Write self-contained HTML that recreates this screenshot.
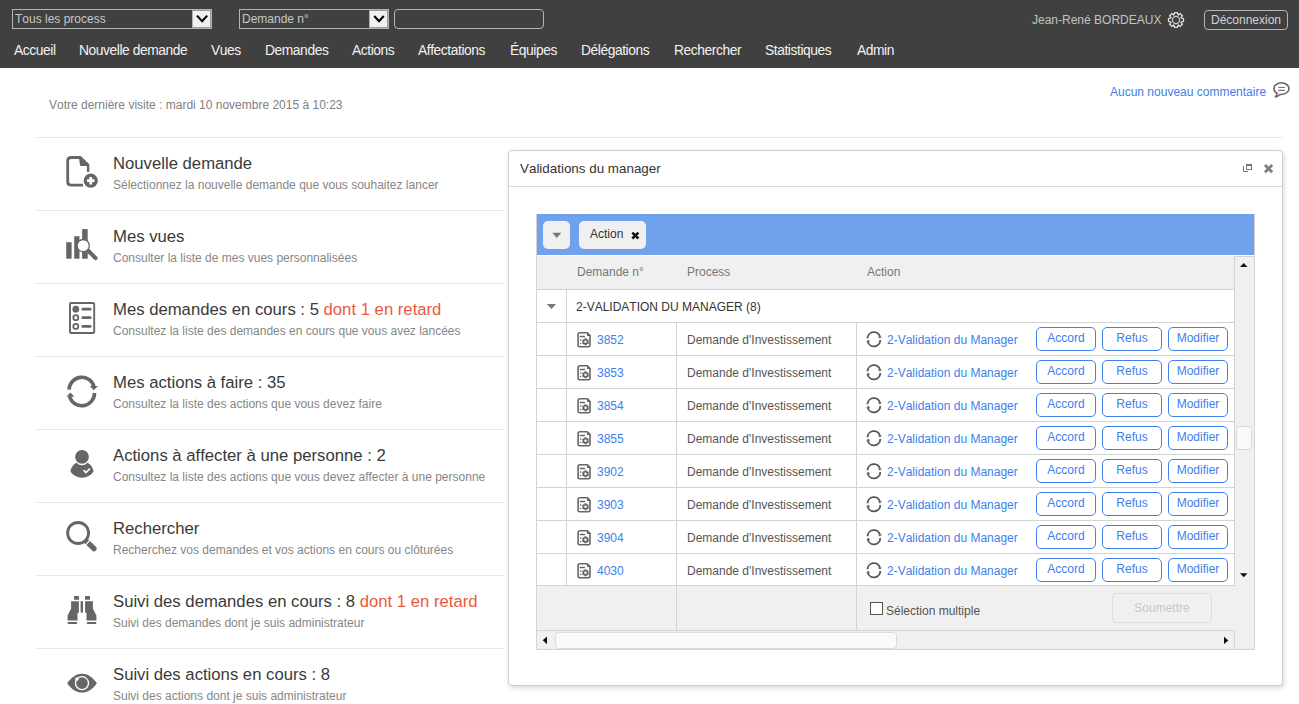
<!DOCTYPE html>
<html><head><meta charset="utf-8"><style>
*{box-sizing:border-box;margin:0;padding:0}
html,body{width:1299px;height:704px;overflow:hidden;background:#fff;font-family:"Liberation Sans",sans-serif;position:relative;font-kerning:none}
div,span{position:absolute;white-space:nowrap}
span.i{position:static}
svg{position:absolute;overflow:visible}
#hdr{left:0;top:0;width:1299px;height:68px;background:#404040}
.sel{top:9px;height:20px;border:1px solid #b4b4b4;background:#404040;color:#c8c8c8;font-size:12px;line-height:18px;padding-left:2px}
.dd{right:0;top:0;width:19px;height:18px;background:#f0f0f0;border:1px solid #9a9a9a;border-left-color:#b0b0b0}
.txtin{left:394px;top:9px;width:150px;height:20px;border:1px solid #b4b4b4;border-radius:4px}
.nav{top:42px;font-size:13.8px;letter-spacing:-0.42px;color:#f2f2f2;line-height:18px}
.user{left:1032px;top:12px;font-size:12px;color:#c2c2c2;line-height:16px}
.logout{left:1204px;top:10px;width:84px;height:20px;border:1px solid #b4b4b4;border-radius:4px;color:#d4d4d4;font-size:12px;line-height:18px;text-align:center}
.visit{left:49px;top:98px;font-size:12px;color:#808080;line-height:14px}
.comm{left:1110px;top:85px;font-size:12px;color:#4080ec;line-height:14px}
.hr{height:1px;background:#e8e8e8}
.t{left:113px;font-size:16.7px;color:#3a3a3a;line-height:20px}
.s{left:113px;font-size:12px;color:#868686;line-height:14px}
.red{position:static;color:#ea5840}
#dlg{left:508px;top:150px;width:775px;height:536px;border:1px solid #cfcfcf;border-radius:4px;background:#fff;box-shadow:1px 2px 5px rgba(0,0,0,0.16)}
.dtitle{left:11px;top:9px;font-size:13.4px;color:#333;line-height:18px}
.dsep{left:0;top:35px;width:773px;height:1px;background:#d8d8d8}
.gl{background:#d3d3d3}
.chip{top:221px;height:28px;background:#f0f0f0;border-radius:5px}
.hcell{top:265px;font-size:12px;color:#777;line-height:14px}
.cell{font-size:12px;line-height:14px}
.btn{width:60px;height:24px;border:1px solid #4080ec;border-radius:5px;color:#4080ec;font-size:12px;line-height:20px;text-align:center;background:#fff}
</style></head><body>
<div id="hdr">
<div class="sel" style="left:12px;width:200px">Tous les process<div class="dd"></div></div>
<svg style="left:0;top:0" width="1" height="1"><path d="M197 15.6 L202.1 21.2 L207.2 15.6" fill="none" stroke="#000" stroke-width="2.1"/></svg>
<div class="sel" style="left:239px;width:150px">Demande n°<div class="dd"></div></div>
<svg style="left:0;top:0" width="1" height="1"><path d="M374.2 16 L379 21.3 L383.8 16" fill="none" stroke="#000" stroke-width="2.1"/></svg>
<div class="txtin"></div>
<div class="user">Jean-René BORDEAUX</div>
<svg style="left:1166px;top:10px" width="20" height="20" viewBox="0 0 20 20"><path d="M8.03 4.76 L8.49 2.55 L11.51 2.55 L11.97 4.76 L12.31 4.90 L14.20 3.67 L16.33 5.80 L15.10 7.69 L15.24 8.03 L17.45 8.49 L17.45 11.51 L15.24 11.97 L15.10 12.31 L16.33 14.20 L14.20 16.33 L12.31 15.10 L11.97 15.24 L11.51 17.45 L8.49 17.45 L8.03 15.24 L7.69 15.10 L5.80 16.33 L3.67 14.20 L4.90 12.31 L4.76 11.97 L2.55 11.51 L2.55 8.49 L4.76 8.03 L4.90 7.69 L3.67 5.80 L5.80 3.67 L7.69 4.90 Z" fill="none" stroke="#dcdcdc" stroke-width="1.3"/><circle cx="10" cy="10" r="3.6" fill="none" stroke="#cfcfcf" stroke-width="1.2"/></svg>
<div class="logout">Déconnexion</div>
<div class="nav" style="left:14px">Accueil</div>
<div class="nav" style="left:79px">Nouvelle demande</div>
<div class="nav" style="left:211px">Vues</div>
<div class="nav" style="left:265px">Demandes</div>
<div class="nav" style="left:352px">Actions</div>
<div class="nav" style="left:418px">Affectations</div>
<div class="nav" style="left:510px">Équipes</div>
<div class="nav" style="left:581px">Délégations</div>
<div class="nav" style="left:674px">Rechercher</div>
<div class="nav" style="left:765px">Statistiques</div>
<div class="nav" style="left:857px">Admin</div>
</div>
<div class="visit">Votre dernière visite : mardi 10 novembre 2015 à 10:23</div>
<div class="comm">Aucun nouveau commentaire</div>
<svg style="left:0;top:0" width="1" height="1"><path d="M1277.3 93.4 A7.5 5.8 0 1 1 1280.3 94.3 Q1277.8 96.6 1275.4 96.9 Q1276.8 95.5 1277.3 93.4 Z" fill="none" stroke="#666" stroke-width="1.5" stroke-linejoin="round"/><path d="M1278.2 87.5 H1285 M1278.2 90.4 H1285" stroke="#777" stroke-width="1.1"/></svg>
<div class="hr" style="left:36px;top:137px;width:1246px"></div>
<div class="t" style="top:154px">Nouvelle demande</div>
<div class="s" style="top:178px">Sélectionnez la nouvelle demande que vous souhaitez lancer</div>
<div class="hr" style="left:36px;top:210px;width:469px"></div>
<div class="t" style="top:227px">Mes vues</div>
<div class="s" style="top:251px">Consulter la liste de mes vues personnalisées</div>
<div class="hr" style="left:36px;top:283px;width:469px"></div>
<div class="t" style="top:300px">Mes demandes en cours : 5 <span class="red">dont 1 en retard</span></div>
<div class="s" style="top:324px">Consultez la liste des demandes en cours que vous avez lancées</div>
<div class="hr" style="left:36px;top:356px;width:469px"></div>
<div class="t" style="top:373px">Mes actions à faire : 35</div>
<div class="s" style="top:397px">Consultez la liste des actions que vous devez faire</div>
<div class="hr" style="left:36px;top:429px;width:469px"></div>
<div class="t" style="top:446px">Actions à affecter à une personne : 2</div>
<div class="s" style="top:470px">Consultez la liste des actions que vous devez affecter à une personne</div>
<div class="hr" style="left:36px;top:502px;width:469px"></div>
<div class="t" style="top:519px">Rechercher</div>
<div class="s" style="top:543px">Recherchez vos demandes et vos actions en cours ou clôturées</div>
<div class="hr" style="left:36px;top:575px;width:469px"></div>
<div class="t" style="top:592px">Suivi des demandes en cours : 8 <span class="red">dont 1 en retard</span></div>
<div class="s" style="top:616px">Suivi des demandes dont je suis administrateur</div>
<div class="hr" style="left:36px;top:648px;width:469px"></div>
<div class="t" style="top:665px">Suivi des actions en cours : 8</div>
<div class="s" style="top:689px">Suivi des actions dont je suis administrateur</div>
<svg style="left:0;top:0" width="1" height="1"><path d="M79.5 157.5 H71.2 Q67.7 157.5 67.7 161 V181.7 Q67.7 185.2 71.2 185.2 H83" fill="none" stroke="#666" stroke-width="2.8"/><path d="M78.8 156.1 H80.8 L89.3 164.3 V172 H86.9 V166 H81.2 Q79.9 166 79.9 164.7 Z" fill="#666"/><circle cx="90.75" cy="180.7" r="8.6" fill="#fff"/><circle cx="90.75" cy="180.7" r="7.1" fill="#666"/><path d="M87 180.7 H94.5 M90.75 177 V184.5" stroke="#fff" stroke-width="2.8"/></svg>
<svg style="left:0;top:0" width="1" height="1"><rect x="66.2" y="242.2" width="5.4" height="16.5" fill="#666"/><rect x="74.2" y="236.2" width="5.3" height="22.5" fill="#666"/><rect x="82.1" y="229.1" width="5.6" height="29.6" fill="#666"/><path d="M87.5 250 L95.6 258.2" stroke="#666" stroke-width="4" stroke-linecap="round"/><circle cx="83.2" cy="245.6" r="6.1" fill="#fff" stroke="#666" stroke-width="1.3"/></svg>
<svg style="left:0;top:0" width="1" height="1"><rect x="70" y="303" width="24.2" height="30" rx="1" fill="none" stroke="#666" stroke-width="1.9"/><circle cx="75.8" cy="309.2" r="3.4" fill="#666"/><circle cx="75.8" cy="317.7" r="2.5" fill="none" stroke="#666" stroke-width="1.8"/><circle cx="75.8" cy="326.4" r="2.5" fill="none" stroke="#666" stroke-width="1.8"/><path d="M82.8 309.2 H90.2 M82.8 317.7 H90.2 M82.8 326.4 H90.2" stroke="#666" stroke-width="2.8" stroke-linecap="round"/></svg>
<svg style="left:66px;top:375px" width="32" height="32" viewBox="0 0 32 32"><path d="M3.05 14.6 A12.75 12.75 0 0 1 27.95 11.2" fill="none" stroke="#666" stroke-width="3.6"/><path d="M23.7 11.0 H31.9 L27.8 15.2 Z" fill="#666"/><path d="M28.55 18.0 A12.75 12.75 0 0 1 3.54 21.5" fill="none" stroke="#666" stroke-width="3.6"/><path d="M0.3 21.7 H8.5 L4.4 17.5 Z" fill="#666"/></svg>
<svg style="left:0;top:0" width="1" height="1"><circle cx="82" cy="456.8" r="6.9" fill="#666"/><path d="M76.5 462.8 C75 463.5 71.5 466 70.4 471.3 C72 474.8 77 477.8 82 477.8 C87 477.8 92 474.8 93.6 471.3 C92.5 466 89 463.5 87.5 462.8 C86 464.5 84.2 465.3 82 465.3 C79.8 465.3 78 464.5 76.5 462.8 Z" fill="#666"/><path d="M83.6 470.2 L85.9 472.5 L89.9 468.6" fill="none" stroke="#fff" stroke-width="1.7"/></svg>
<svg style="left:0;top:0" width="1" height="1"><circle cx="78.1" cy="533" r="10.5" fill="none" stroke="#666" stroke-width="2.8"/><path d="M86.6 541.5 L94.0 548.6" stroke="#666" stroke-width="5.3" stroke-linecap="round"/><path d="M85.3 545.3 L89.8 540.3" stroke="#fff" stroke-width="1.2"/></svg>
<svg style="left:0;top:0" width="1" height="1"><rect x="74" y="595.9" width="5" height="3.9" rx="0.6" fill="#666"/><rect x="85" y="595.9" width="5" height="3.9" rx="0.6" fill="#666"/><path d="M71.1 601.2 H78.9 V612.7 H77.5 V620.4 H67.6 V615.5 L71.1 608.4 Z" fill="#666"/><path d="M92.9 601.2 H85.1 V612.7 H86.5 V620.4 H96.4 V615.5 L92.9 608.4 Z" fill="#666"/><rect x="80.6" y="601.2" width="2.4" height="11.4" fill="#666"/><rect x="67.6" y="621.9" width="9.6" height="2.2" rx="0.8" fill="#666"/><rect x="86.8" y="621.9" width="9.6" height="2.2" rx="0.8" fill="#666"/></svg>
<svg style="left:0;top:0" width="1" height="1"><path d="M67.2 683.2 C71.5 677 76.5 673.7 82 673.7 C87.5 673.7 92.5 677 96.9 683.2 C92.5 689.4 87.5 692.6 82 692.6 C76.5 692.6 71.5 689.4 67.2 683.2 Z" fill="#666"/><circle cx="82" cy="683.2" r="6.5" fill="none" stroke="#fff" stroke-width="1.3"/><circle cx="77" cy="679" r="1.8" fill="#fff"/></svg>
<div id="dlg"><div class="dtitle">Validations du manager</div><div class="dsep"></div></div>
<svg style="left:0;top:0" width="1" height="1"><rect x="1246.5" y="164.5" width="5" height="5" fill="none" stroke="#777" stroke-width="1"/><rect x="1246" y="164" width="6" height="2" fill="#777"/><path d="M1243.5 166 V171.5 H1248" fill="none" stroke="#777" stroke-width="1"/><path d="M1265 165 L1272.2 172.2 M1272.2 165 L1265 172.2" stroke="#808080" stroke-width="2.9"/></svg>
<div style="left:536px;top:214px;width:719px;height:436px;border:1px solid #d3d3d3;border-top:none;background:#fff"></div>
<div style="left:537px;top:214px;width:717px;height:41px;background:#6fa1ec"></div>
<div class="chip" style="left:543px;width:27px"></div>
<svg style="left:0;top:0" width="1" height="1"><path d="M552.3 232.7 H561.3 L556.8 238 Z" fill="#777"/></svg>
<div class="chip" style="left:579px;width:67px"></div>
<div class="cell" style="left:590px;top:227px;color:#333">Action</div>
<svg style="left:0;top:0" width="1" height="1"><path d="M632.3 232.6 L638.4 238.5 M638.4 232.6 L632.3 238.5" stroke="#111" stroke-width="2.5"/></svg>
<div style="left:537px;top:256px;width:698px;height:33px;background:#f0f0f0"></div>
<div class="gl" style="left:537px;top:289px;width:698px;height:1px"></div>
<div class="hcell" style="left:577px">Demande n°</div>
<div class="hcell" style="left:687px">Process</div>
<div class="hcell" style="left:867px">Action</div>
<svg style="left:0;top:0" width="1" height="1"><path d="M546.9 304 H556 L551.45 309 Z" fill="#777"/></svg>
<div class="cell" style="left:576px;top:300px;color:#333">2-VALIDATION DU MANAGER (8)</div>
<div class="gl" style="left:537px;top:322px;width:698px;height:1px"></div>
<div class="gl" style="left:566px;top:290px;width:1px;height:296px"></div>
<div class="gl" style="left:676px;top:323px;width:1px;height:307px"></div>
<div class="gl" style="left:856px;top:323px;width:1px;height:307px"></div>
<svg style="left:0;top:0px" width="1" height="1"><path d="M587.3 332.8 H579.8 Q578.1 332.8 578.1 334.5 V345 Q578.1 346.7 579.8 346.7 H588.3 Q590 346.7 590 345 V335.6 Z" fill="none" stroke="#666" stroke-width="1.6"/><path d="M587 332 L591 336 H587 Z" fill="#666"/><path d="M580.3 336.5 H584.5" stroke="#666" stroke-width="1.4" stroke-linecap="round"/><circle cx="580.7" cy="340.1" r="0.8" fill="#666"/><circle cx="580.6" cy="343.5" r="0.8" fill="#666"/><path d="M584.21 339.43 L584.51 338.34 L586.49 338.34 L586.79 339.43 L586.90 339.49 L588.00 339.21 L588.99 340.93 L588.20 341.74 L588.20 341.86 L588.99 342.67 L588.00 344.39 L586.90 344.11 L586.79 344.17 L586.49 345.26 L584.51 345.26 L584.21 344.17 L584.10 344.11 L583.00 344.39 L582.01 342.67 L582.80 341.86 L582.80 341.74 L582.01 340.93 L583.00 339.21 L584.10 339.49 Z M586.75 341.80 A1.25 1.25 0 1 0 584.25 341.80 A1.25 1.25 0 1 0 586.75 341.80 Z" fill="#666" fill-rule="evenodd"/></svg>
<div class="cell" style="left:597px;top:333px;color:#4080ec">3852</div>
<div class="cell" style="left:687px;top:333px;color:#555">Demande d'Investissement</div>
<svg style="left:866px;top:331px" width="16" height="16" viewBox="0 0 32 32"><path d="M3.05 14.6 A12.75 12.75 0 0 1 27.95 11.2" fill="none" stroke="#555" stroke-width="3.6"/><path d="M23.7 11.0 H31.9 L27.8 15.2 Z" fill="#555"/><path d="M28.55 18.0 A12.75 12.75 0 0 1 3.54 21.5" fill="none" stroke="#555" stroke-width="3.6"/><path d="M0.3 21.7 H8.5 L4.4 17.5 Z" fill="#555"/></svg>
<div class="cell" style="left:887px;top:333px;color:#4080ec">2-Validation du Manager</div>
<div class="btn" style="left:1036px;top:327px">Accord</div>
<div class="btn" style="left:1102px;top:327px">Refus</div>
<div class="btn" style="left:1168px;top:327px">Modifier</div>
<div class="gl" style="left:537px;top:355px;width:698px;height:1px"></div>
<svg style="left:0;top:33px" width="1" height="1"><path d="M587.3 332.8 H579.8 Q578.1 332.8 578.1 334.5 V345 Q578.1 346.7 579.8 346.7 H588.3 Q590 346.7 590 345 V335.6 Z" fill="none" stroke="#666" stroke-width="1.6"/><path d="M587 332 L591 336 H587 Z" fill="#666"/><path d="M580.3 336.5 H584.5" stroke="#666" stroke-width="1.4" stroke-linecap="round"/><circle cx="580.7" cy="340.1" r="0.8" fill="#666"/><circle cx="580.6" cy="343.5" r="0.8" fill="#666"/><path d="M584.21 339.43 L584.51 338.34 L586.49 338.34 L586.79 339.43 L586.90 339.49 L588.00 339.21 L588.99 340.93 L588.20 341.74 L588.20 341.86 L588.99 342.67 L588.00 344.39 L586.90 344.11 L586.79 344.17 L586.49 345.26 L584.51 345.26 L584.21 344.17 L584.10 344.11 L583.00 344.39 L582.01 342.67 L582.80 341.86 L582.80 341.74 L582.01 340.93 L583.00 339.21 L584.10 339.49 Z M586.75 341.80 A1.25 1.25 0 1 0 584.25 341.80 A1.25 1.25 0 1 0 586.75 341.80 Z" fill="#666" fill-rule="evenodd"/></svg>
<div class="cell" style="left:597px;top:366px;color:#4080ec">3853</div>
<div class="cell" style="left:687px;top:366px;color:#555">Demande d'Investissement</div>
<svg style="left:866px;top:364px" width="16" height="16" viewBox="0 0 32 32"><path d="M3.05 14.6 A12.75 12.75 0 0 1 27.95 11.2" fill="none" stroke="#555" stroke-width="3.6"/><path d="M23.7 11.0 H31.9 L27.8 15.2 Z" fill="#555"/><path d="M28.55 18.0 A12.75 12.75 0 0 1 3.54 21.5" fill="none" stroke="#555" stroke-width="3.6"/><path d="M0.3 21.7 H8.5 L4.4 17.5 Z" fill="#555"/></svg>
<div class="cell" style="left:887px;top:366px;color:#4080ec">2-Validation du Manager</div>
<div class="btn" style="left:1036px;top:360px">Accord</div>
<div class="btn" style="left:1102px;top:360px">Refus</div>
<div class="btn" style="left:1168px;top:360px">Modifier</div>
<div class="gl" style="left:537px;top:388px;width:698px;height:1px"></div>
<svg style="left:0;top:66px" width="1" height="1"><path d="M587.3 332.8 H579.8 Q578.1 332.8 578.1 334.5 V345 Q578.1 346.7 579.8 346.7 H588.3 Q590 346.7 590 345 V335.6 Z" fill="none" stroke="#666" stroke-width="1.6"/><path d="M587 332 L591 336 H587 Z" fill="#666"/><path d="M580.3 336.5 H584.5" stroke="#666" stroke-width="1.4" stroke-linecap="round"/><circle cx="580.7" cy="340.1" r="0.8" fill="#666"/><circle cx="580.6" cy="343.5" r="0.8" fill="#666"/><path d="M584.21 339.43 L584.51 338.34 L586.49 338.34 L586.79 339.43 L586.90 339.49 L588.00 339.21 L588.99 340.93 L588.20 341.74 L588.20 341.86 L588.99 342.67 L588.00 344.39 L586.90 344.11 L586.79 344.17 L586.49 345.26 L584.51 345.26 L584.21 344.17 L584.10 344.11 L583.00 344.39 L582.01 342.67 L582.80 341.86 L582.80 341.74 L582.01 340.93 L583.00 339.21 L584.10 339.49 Z M586.75 341.80 A1.25 1.25 0 1 0 584.25 341.80 A1.25 1.25 0 1 0 586.75 341.80 Z" fill="#666" fill-rule="evenodd"/></svg>
<div class="cell" style="left:597px;top:399px;color:#4080ec">3854</div>
<div class="cell" style="left:687px;top:399px;color:#555">Demande d'Investissement</div>
<svg style="left:866px;top:397px" width="16" height="16" viewBox="0 0 32 32"><path d="M3.05 14.6 A12.75 12.75 0 0 1 27.95 11.2" fill="none" stroke="#555" stroke-width="3.6"/><path d="M23.7 11.0 H31.9 L27.8 15.2 Z" fill="#555"/><path d="M28.55 18.0 A12.75 12.75 0 0 1 3.54 21.5" fill="none" stroke="#555" stroke-width="3.6"/><path d="M0.3 21.7 H8.5 L4.4 17.5 Z" fill="#555"/></svg>
<div class="cell" style="left:887px;top:399px;color:#4080ec">2-Validation du Manager</div>
<div class="btn" style="left:1036px;top:393px">Accord</div>
<div class="btn" style="left:1102px;top:393px">Refus</div>
<div class="btn" style="left:1168px;top:393px">Modifier</div>
<div class="gl" style="left:537px;top:421px;width:698px;height:1px"></div>
<svg style="left:0;top:99px" width="1" height="1"><path d="M587.3 332.8 H579.8 Q578.1 332.8 578.1 334.5 V345 Q578.1 346.7 579.8 346.7 H588.3 Q590 346.7 590 345 V335.6 Z" fill="none" stroke="#666" stroke-width="1.6"/><path d="M587 332 L591 336 H587 Z" fill="#666"/><path d="M580.3 336.5 H584.5" stroke="#666" stroke-width="1.4" stroke-linecap="round"/><circle cx="580.7" cy="340.1" r="0.8" fill="#666"/><circle cx="580.6" cy="343.5" r="0.8" fill="#666"/><path d="M584.21 339.43 L584.51 338.34 L586.49 338.34 L586.79 339.43 L586.90 339.49 L588.00 339.21 L588.99 340.93 L588.20 341.74 L588.20 341.86 L588.99 342.67 L588.00 344.39 L586.90 344.11 L586.79 344.17 L586.49 345.26 L584.51 345.26 L584.21 344.17 L584.10 344.11 L583.00 344.39 L582.01 342.67 L582.80 341.86 L582.80 341.74 L582.01 340.93 L583.00 339.21 L584.10 339.49 Z M586.75 341.80 A1.25 1.25 0 1 0 584.25 341.80 A1.25 1.25 0 1 0 586.75 341.80 Z" fill="#666" fill-rule="evenodd"/></svg>
<div class="cell" style="left:597px;top:432px;color:#4080ec">3855</div>
<div class="cell" style="left:687px;top:432px;color:#555">Demande d'Investissement</div>
<svg style="left:866px;top:430px" width="16" height="16" viewBox="0 0 32 32"><path d="M3.05 14.6 A12.75 12.75 0 0 1 27.95 11.2" fill="none" stroke="#555" stroke-width="3.6"/><path d="M23.7 11.0 H31.9 L27.8 15.2 Z" fill="#555"/><path d="M28.55 18.0 A12.75 12.75 0 0 1 3.54 21.5" fill="none" stroke="#555" stroke-width="3.6"/><path d="M0.3 21.7 H8.5 L4.4 17.5 Z" fill="#555"/></svg>
<div class="cell" style="left:887px;top:432px;color:#4080ec">2-Validation du Manager</div>
<div class="btn" style="left:1036px;top:426px">Accord</div>
<div class="btn" style="left:1102px;top:426px">Refus</div>
<div class="btn" style="left:1168px;top:426px">Modifier</div>
<div class="gl" style="left:537px;top:454px;width:698px;height:1px"></div>
<svg style="left:0;top:132px" width="1" height="1"><path d="M587.3 332.8 H579.8 Q578.1 332.8 578.1 334.5 V345 Q578.1 346.7 579.8 346.7 H588.3 Q590 346.7 590 345 V335.6 Z" fill="none" stroke="#666" stroke-width="1.6"/><path d="M587 332 L591 336 H587 Z" fill="#666"/><path d="M580.3 336.5 H584.5" stroke="#666" stroke-width="1.4" stroke-linecap="round"/><circle cx="580.7" cy="340.1" r="0.8" fill="#666"/><circle cx="580.6" cy="343.5" r="0.8" fill="#666"/><path d="M584.21 339.43 L584.51 338.34 L586.49 338.34 L586.79 339.43 L586.90 339.49 L588.00 339.21 L588.99 340.93 L588.20 341.74 L588.20 341.86 L588.99 342.67 L588.00 344.39 L586.90 344.11 L586.79 344.17 L586.49 345.26 L584.51 345.26 L584.21 344.17 L584.10 344.11 L583.00 344.39 L582.01 342.67 L582.80 341.86 L582.80 341.74 L582.01 340.93 L583.00 339.21 L584.10 339.49 Z M586.75 341.80 A1.25 1.25 0 1 0 584.25 341.80 A1.25 1.25 0 1 0 586.75 341.80 Z" fill="#666" fill-rule="evenodd"/></svg>
<div class="cell" style="left:597px;top:465px;color:#4080ec">3902</div>
<div class="cell" style="left:687px;top:465px;color:#555">Demande d'Investissement</div>
<svg style="left:866px;top:463px" width="16" height="16" viewBox="0 0 32 32"><path d="M3.05 14.6 A12.75 12.75 0 0 1 27.95 11.2" fill="none" stroke="#555" stroke-width="3.6"/><path d="M23.7 11.0 H31.9 L27.8 15.2 Z" fill="#555"/><path d="M28.55 18.0 A12.75 12.75 0 0 1 3.54 21.5" fill="none" stroke="#555" stroke-width="3.6"/><path d="M0.3 21.7 H8.5 L4.4 17.5 Z" fill="#555"/></svg>
<div class="cell" style="left:887px;top:465px;color:#4080ec">2-Validation du Manager</div>
<div class="btn" style="left:1036px;top:459px">Accord</div>
<div class="btn" style="left:1102px;top:459px">Refus</div>
<div class="btn" style="left:1168px;top:459px">Modifier</div>
<div class="gl" style="left:537px;top:487px;width:698px;height:1px"></div>
<svg style="left:0;top:165px" width="1" height="1"><path d="M587.3 332.8 H579.8 Q578.1 332.8 578.1 334.5 V345 Q578.1 346.7 579.8 346.7 H588.3 Q590 346.7 590 345 V335.6 Z" fill="none" stroke="#666" stroke-width="1.6"/><path d="M587 332 L591 336 H587 Z" fill="#666"/><path d="M580.3 336.5 H584.5" stroke="#666" stroke-width="1.4" stroke-linecap="round"/><circle cx="580.7" cy="340.1" r="0.8" fill="#666"/><circle cx="580.6" cy="343.5" r="0.8" fill="#666"/><path d="M584.21 339.43 L584.51 338.34 L586.49 338.34 L586.79 339.43 L586.90 339.49 L588.00 339.21 L588.99 340.93 L588.20 341.74 L588.20 341.86 L588.99 342.67 L588.00 344.39 L586.90 344.11 L586.79 344.17 L586.49 345.26 L584.51 345.26 L584.21 344.17 L584.10 344.11 L583.00 344.39 L582.01 342.67 L582.80 341.86 L582.80 341.74 L582.01 340.93 L583.00 339.21 L584.10 339.49 Z M586.75 341.80 A1.25 1.25 0 1 0 584.25 341.80 A1.25 1.25 0 1 0 586.75 341.80 Z" fill="#666" fill-rule="evenodd"/></svg>
<div class="cell" style="left:597px;top:498px;color:#4080ec">3903</div>
<div class="cell" style="left:687px;top:498px;color:#555">Demande d'Investissement</div>
<svg style="left:866px;top:496px" width="16" height="16" viewBox="0 0 32 32"><path d="M3.05 14.6 A12.75 12.75 0 0 1 27.95 11.2" fill="none" stroke="#555" stroke-width="3.6"/><path d="M23.7 11.0 H31.9 L27.8 15.2 Z" fill="#555"/><path d="M28.55 18.0 A12.75 12.75 0 0 1 3.54 21.5" fill="none" stroke="#555" stroke-width="3.6"/><path d="M0.3 21.7 H8.5 L4.4 17.5 Z" fill="#555"/></svg>
<div class="cell" style="left:887px;top:498px;color:#4080ec">2-Validation du Manager</div>
<div class="btn" style="left:1036px;top:492px">Accord</div>
<div class="btn" style="left:1102px;top:492px">Refus</div>
<div class="btn" style="left:1168px;top:492px">Modifier</div>
<div class="gl" style="left:537px;top:520px;width:698px;height:1px"></div>
<svg style="left:0;top:198px" width="1" height="1"><path d="M587.3 332.8 H579.8 Q578.1 332.8 578.1 334.5 V345 Q578.1 346.7 579.8 346.7 H588.3 Q590 346.7 590 345 V335.6 Z" fill="none" stroke="#666" stroke-width="1.6"/><path d="M587 332 L591 336 H587 Z" fill="#666"/><path d="M580.3 336.5 H584.5" stroke="#666" stroke-width="1.4" stroke-linecap="round"/><circle cx="580.7" cy="340.1" r="0.8" fill="#666"/><circle cx="580.6" cy="343.5" r="0.8" fill="#666"/><path d="M584.21 339.43 L584.51 338.34 L586.49 338.34 L586.79 339.43 L586.90 339.49 L588.00 339.21 L588.99 340.93 L588.20 341.74 L588.20 341.86 L588.99 342.67 L588.00 344.39 L586.90 344.11 L586.79 344.17 L586.49 345.26 L584.51 345.26 L584.21 344.17 L584.10 344.11 L583.00 344.39 L582.01 342.67 L582.80 341.86 L582.80 341.74 L582.01 340.93 L583.00 339.21 L584.10 339.49 Z M586.75 341.80 A1.25 1.25 0 1 0 584.25 341.80 A1.25 1.25 0 1 0 586.75 341.80 Z" fill="#666" fill-rule="evenodd"/></svg>
<div class="cell" style="left:597px;top:531px;color:#4080ec">3904</div>
<div class="cell" style="left:687px;top:531px;color:#555">Demande d'Investissement</div>
<svg style="left:866px;top:529px" width="16" height="16" viewBox="0 0 32 32"><path d="M3.05 14.6 A12.75 12.75 0 0 1 27.95 11.2" fill="none" stroke="#555" stroke-width="3.6"/><path d="M23.7 11.0 H31.9 L27.8 15.2 Z" fill="#555"/><path d="M28.55 18.0 A12.75 12.75 0 0 1 3.54 21.5" fill="none" stroke="#555" stroke-width="3.6"/><path d="M0.3 21.7 H8.5 L4.4 17.5 Z" fill="#555"/></svg>
<div class="cell" style="left:887px;top:531px;color:#4080ec">2-Validation du Manager</div>
<div class="btn" style="left:1036px;top:525px">Accord</div>
<div class="btn" style="left:1102px;top:525px">Refus</div>
<div class="btn" style="left:1168px;top:525px">Modifier</div>
<div class="gl" style="left:537px;top:553px;width:698px;height:1px"></div>
<svg style="left:0;top:231px" width="1" height="1"><path d="M587.3 332.8 H579.8 Q578.1 332.8 578.1 334.5 V345 Q578.1 346.7 579.8 346.7 H588.3 Q590 346.7 590 345 V335.6 Z" fill="none" stroke="#666" stroke-width="1.6"/><path d="M587 332 L591 336 H587 Z" fill="#666"/><path d="M580.3 336.5 H584.5" stroke="#666" stroke-width="1.4" stroke-linecap="round"/><circle cx="580.7" cy="340.1" r="0.8" fill="#666"/><circle cx="580.6" cy="343.5" r="0.8" fill="#666"/><path d="M584.21 339.43 L584.51 338.34 L586.49 338.34 L586.79 339.43 L586.90 339.49 L588.00 339.21 L588.99 340.93 L588.20 341.74 L588.20 341.86 L588.99 342.67 L588.00 344.39 L586.90 344.11 L586.79 344.17 L586.49 345.26 L584.51 345.26 L584.21 344.17 L584.10 344.11 L583.00 344.39 L582.01 342.67 L582.80 341.86 L582.80 341.74 L582.01 340.93 L583.00 339.21 L584.10 339.49 Z M586.75 341.80 A1.25 1.25 0 1 0 584.25 341.80 A1.25 1.25 0 1 0 586.75 341.80 Z" fill="#666" fill-rule="evenodd"/></svg>
<div class="cell" style="left:597px;top:564px;color:#4080ec">4030</div>
<div class="cell" style="left:687px;top:564px;color:#555">Demande d'Investissement</div>
<svg style="left:866px;top:562px" width="16" height="16" viewBox="0 0 32 32"><path d="M3.05 14.6 A12.75 12.75 0 0 1 27.95 11.2" fill="none" stroke="#555" stroke-width="3.6"/><path d="M23.7 11.0 H31.9 L27.8 15.2 Z" fill="#555"/><path d="M28.55 18.0 A12.75 12.75 0 0 1 3.54 21.5" fill="none" stroke="#555" stroke-width="3.6"/><path d="M0.3 21.7 H8.5 L4.4 17.5 Z" fill="#555"/></svg>
<div class="cell" style="left:887px;top:564px;color:#4080ec">2-Validation du Manager</div>
<div class="btn" style="left:1036px;top:558px">Accord</div>
<div class="btn" style="left:1102px;top:558px">Refus</div>
<div class="btn" style="left:1168px;top:558px">Modifier</div>
<div class="gl" style="left:537px;top:586px;width:698px;height:1px"></div>
<div style="left:1234px;top:256px;width:21px;height:330px;background:#f0f0f0;border:1px solid #d3d3d3;border-bottom:none"></div>
<svg style="left:0;top:0" width="1" height="1"><path d="M1240 267 H1247.5 L1243.75 263 Z" fill="#111"/><path d="M1240 573.2 H1247.5 L1243.75 577.2 Z" fill="#111"/></svg>
<div style="left:1236px;top:426px;width:16px;height:24px;background:#fafafa;border:1px solid #d8d8d8;border-radius:4px"></div>
<div style="left:537px;top:586px;width:717px;height:63px;background:#f0f0f0"></div>
<div class="gl" style="left:537px;top:585px;width:698px;height:1px"></div>
<div class="gl" style="left:676px;top:586px;width:1px;height:44px"></div>
<div class="gl" style="left:856px;top:586px;width:1px;height:44px"></div>
<div style="left:870px;top:602px;width:13px;height:13px;border:1px solid #555;background:#fff"></div>
<div class="cell" style="left:886px;top:604px;color:#555">Sélection multiple</div>
<div style="left:1112px;top:593px;width:100px;height:30px;border:1px solid #dcdcdc;border-radius:5px;color:#c8c8c8;font-size:12px;line-height:29px;text-align:center">Soumettre</div>
<div class="gl" style="left:537px;top:630px;width:698px;height:1px"></div>
<div class="gl" style="left:1234px;top:630px;width:1px;height:19px"></div>
<div style="left:555px;top:632px;width:342px;height:17px;background:#fafafa;border:1px solid #dcdcdc;border-radius:4px"></div>
<svg style="left:0;top:0" width="1" height="1"><path d="M547 636.4 V644.2 L542.7 640.3 Z" fill="#111"/><path d="M1224 636.7 V644.1 L1228.4 640.4 Z" fill="#111"/></svg>
</body></html>
